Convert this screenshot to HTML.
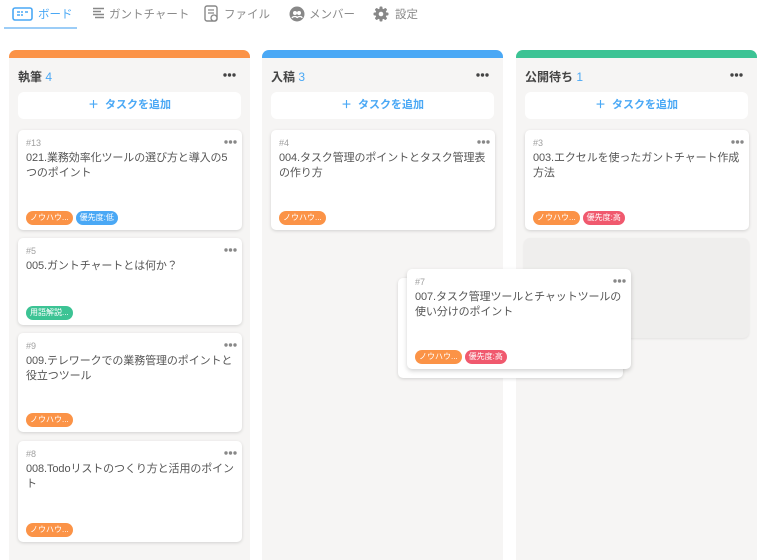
<!DOCTYPE html>
<html><head><meta charset="utf-8"><style>
*{box-sizing:border-box;margin:0;padding:0}
body{width:768px;height:551px;overflow:hidden;background:#fff;font-family:"Liberation Sans","Noto Sans CJK JP",sans-serif;position:relative}
.a{position:absolute}
.tab{position:absolute;top:7px;font-size:11.5px;color:#8a8a8a;height:16px;line-height:16px}
.col{position:absolute;top:50px;width:241px;height:510px;background:#f6f5f4;border-radius:7px 7px 0 0;overflow:hidden}
.bar{height:8px}
.ct{position:absolute;left:9px;top:18px;font-size:12px;font-weight:bold;color:#444}
.ct span{color:#4aa8f5;font-weight:normal}
.dots{position:absolute;width:14px;height:4px}
.add{position:absolute;left:9px;top:42px;width:223px;height:27px;background:#fff;border-radius:6px;text-align:center;line-height:27px;font-size:11px;color:#4aa8f5;font-weight:bold}
.card{position:absolute;background:#fff;border-radius:5px;box-shadow:0 1px 3px rgba(0,0,0,.15);width:224px}
.num{position:absolute;left:8px;top:8px;font-size:9px;color:#a0a0a0}
.cd{position:absolute;right:5px;top:10px;width:13px;height:4px}
.txt{position:absolute;left:8px;top:21px;right:6px;font-size:11px;line-height:15px;color:#555;letter-spacing:-0.1px}
.tags{position:absolute;left:8px;bottom:5px;display:flex;gap:3px}
.tag{height:14px;line-height:14px;border-radius:7px;font-size:8px;color:#fff;padding:0 4px}
.o{background:#fb9347}.b{background:#4aa8f5}.g{background:#3cc394}.r{background:#f0596e}
</style></head><body>
<svg width="0" height="0" style="position:absolute"><defs><g id="d3"><circle cx="2" cy="2" r="1.7"/><circle cx="6.5" cy="2" r="1.7"/><circle cx="11" cy="2" r="1.7"/></g></defs></svg>
<svg class="a" style="left:12px;top:7px" width="21" height="14"><rect x="1" y="1" width="19" height="12" rx="2" fill="none" stroke="#4aa8f5" stroke-width="1.6"/><path d="M5 5h3M9 5h2M13 5h3M5 8h3M9 8h2" stroke="#4aa8f5" stroke-width="1.4"/></svg>
<div class="tab" style="left:38px;color:#4aa8f5">ボード</div>
<div class="a" style="left:4px;top:27px;width:73px;height:2px;background:#9ccdf7"></div>
<svg class="a" style="left:93px;top:7px" width="12" height="13"><path d="M0 1.5h11M0 4.5h8M0 7.5h11M2 10.5h9" stroke="#888" stroke-width="1.4"/></svg>
<div class="tab" style="left:109px">ガントチャート</div>
<svg class="a" style="left:204px;top:5px" width="15" height="17"><rect x="1" y="1" width="12" height="15" rx="2" fill="none" stroke="#888" stroke-width="1.4"/><path d="M4 5h6M4 8h6" stroke="#888" stroke-width="1.3"/><circle cx="10" cy="13" r="3" fill="#fff" stroke="#888" stroke-width="1.3"/></svg>
<div class="tab" style="left:224px">ファイル</div>
<svg class="a" style="left:289px;top:6px" width="16" height="16"><circle cx="8" cy="8" r="7.5" fill="#888"/><circle cx="6" cy="7" r="2" fill="#fff"/><circle cx="10" cy="7" r="2" fill="#fff"/><path d="M3 12c1-2 5-2 5 0M8 12c1-2 5-2 5 0" stroke="#fff" stroke-width="1.3" fill="none"/></svg>
<div class="tab" style="left:309px">メンバー</div>
<svg class="a" style="left:373px;top:6px" width="16" height="16" viewBox="0 0 16 16"><g fill="#888"><circle cx="8" cy="8" r="5.5"/><rect x="6.5" y="0.5" width="3" height="15" rx="1"/><rect x="0.5" y="6.5" width="15" height="3" rx="1"/><rect x="6.5" y="0.5" width="3" height="15" rx="1" transform="rotate(45 8 8)"/><rect x="6.5" y="0.5" width="3" height="15" rx="1" transform="rotate(-45 8 8)"/></g><circle cx="8" cy="8" r="2.3" fill="#fff"/></svg>
<div class="tab" style="left:395px">設定</div>

<div class="col" style="left:9px"><div class="bar" style="background:#fb9347"></div>
<div class="ct">執筆 <span>4</span></div><svg class="dots" style="left:214px;top:23px"><use href="#d3" fill="#444"/></svg>
<div class="add">＋&nbsp; タスクを追加</div>
<div class="card" style="left:9px;top:80px;height:100px"><div class="num">#13</div><svg class="cd"><use href="#d3" fill="#888"/></svg><div class="txt">021.業務効率化ツールの選び方と導入の5つのポイント</div><div class="tags"><div class="tag o">ノウハウ...</div><div class="tag b">優先度:低</div></div></div>
<div class="card" style="left:9px;top:188px;height:87px"><div class="num">#5</div><svg class="cd"><use href="#d3" fill="#888"/></svg><div class="txt">005.ガントチャートとは何か？</div><div class="tags"><div class="tag g">用語解説...</div></div></div>
<div class="card" style="left:9px;top:283px;height:99px"><div class="num">#9</div><svg class="cd"><use href="#d3" fill="#888"/></svg><div class="txt">009.テレワークでの業務管理のポイントと役立つツール</div><div class="tags"><div class="tag o">ノウハウ...</div></div></div>
<div class="card" style="left:9px;top:391px;height:101px"><div class="num">#8</div><svg class="cd"><use href="#d3" fill="#888"/></svg><div class="txt">008.Todoリストのつくり方と活用のポイント</div><div class="tags"><div class="tag o">ノウハウ...</div></div></div>
</div>

<div class="col" style="left:262px"><div class="bar" style="background:#4aa8f5"></div>
<div class="ct">入稿 <span>3</span></div><svg class="dots" style="left:214px;top:23px"><use href="#d3" fill="#444"/></svg>
<div class="add">＋&nbsp; タスクを追加</div>
<div class="card" style="left:9px;top:80px;height:100px"><div class="num">#4</div><svg class="cd"><use href="#d3" fill="#888"/></svg><div class="txt">004.タスク管理のポイントとタスク管理表の作り方</div><div class="tags"><div class="tag o">ノウハウ...</div></div></div>
</div>

<div class="col" style="left:516px"><div class="bar" style="background:#3cc394"></div>
<div class="ct">公開待ち <span>1</span></div><svg class="dots" style="left:214px;top:23px"><use href="#d3" fill="#444"/></svg>
<div class="add">＋&nbsp; タスクを追加</div>
<div class="card" style="left:9px;top:80px;height:100px"><div class="num">#3</div><svg class="cd"><use href="#d3" fill="#888"/></svg><div class="txt">003.エクセルを使ったガントチャート作成方法</div><div class="tags"><div class="tag o">ノウハウ...</div><div class="tag r">優先度:高</div></div></div>
<div class="a" style="left:8px;top:188px;width:225px;height:100px;background:#efeeed;border-radius:6px;box-shadow:0 1px 2px rgba(0,0,0,.08)"></div>
</div>

<div class="card" style="left:398px;top:278px;height:100px;width:225px"></div>
<div class="card" style="left:407px;top:269px;height:100px;box-shadow:0 2px 5px rgba(0,0,0,.18)"><div class="num">#7</div><svg class="cd"><use href="#d3" fill="#888"/></svg><div class="txt">007.タスク管理ツールとチャットツールの使い分けのポイント</div><div class="tags"><div class="tag o">ノウハウ...</div><div class="tag r">優先度:高</div></div></div>
</body></html>
